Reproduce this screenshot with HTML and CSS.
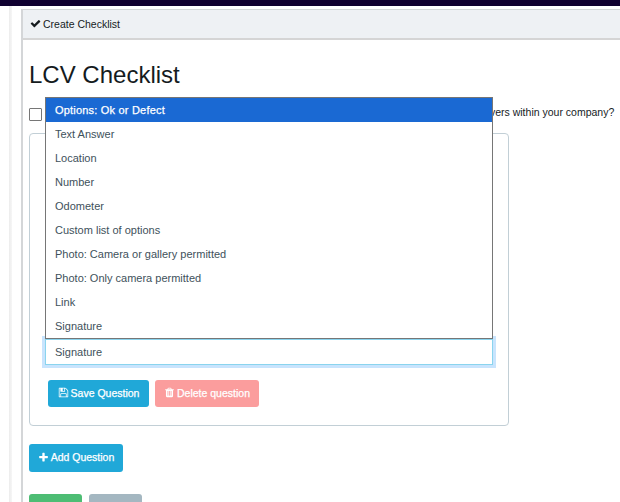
FILE: index.html
```html
<!DOCTYPE html>
<html lang="en">
<head>
<meta charset="utf-8">
<title>Create Checklist</title>
<link rel="stylesheet" href="styles.css">
</head>
<body>
<div class="topbar"></div>
<div class="layout">
  <div class="rail"></div>
  <section class="panel">
    <header class="panel-head">
      <svg class="icon icon-check" viewBox="0 0 1792 1792"><path d="M1671 566q0 40-28 68l-724 724-136 136q-28 28-68 28t-68-28l-136-136-362-362q-28-28-28-68t28-68l136-136q28-28 68-28t68 28l294 295 656-657q28-28 68-28t68 28l136 136q28 28 28 68z"/></svg>
      <span>Create Checklist</span>
    </header>
    <div class="panel-body">
      <h1 class="title">LCV Checklist</h1>
      <label class="share">
        <span class="checkbox"></span>
        <span class="share-text">Would you really like this checklist to be made visible and available for use by all of the other drivers within your company?</span>
      </label>
      <div class="card">
        <div class="select-wrap">
          <ul class="dropdown">
            <li class="selected">Options: Ok or Defect</li>
            <li>Text Answer</li>
            <li>Location</li>
            <li>Number</li>
            <li>Odometer</li>
            <li>Custom list of options</li>
            <li>Photo: Camera or gallery permitted</li>
            <li>Photo: Only camera permitted</li>
            <li>Link</li>
            <li>Signature</li>
          </ul>
          <div class="select">Signature</div>
        </div>
        <div class="card-actions">
          <button class="btn btn-info" type="button">
            <svg class="icon" viewBox="0 0 1792 1792"><path d="M512 1536h768v-384h-768v384zm896 0h128v-896q0-14-10-38.500t-20-34.500l-281-281q-10-10-34-20t-39-10v416q0 40-28 68t-68 28h-576q-40 0-68-28t-28-68v-416h-128v1280h128v-416q0-40 28-68t68-28h832q40 0 68 28t28 68v416zm-384-928v-320q0-13-9.500-22.500t-22.500-9.500h-192q-13 0-22.500 9.500t-9.500 22.500v320q0 13 9.500 22.500t22.500 9.500h192q13 0 22.500-9.500t9.500-22.500zm640 32v928q0 40-28 68t-68 28h-1344q-40 0-68-28t-28-68v-1344q0-40 28-68t68-28h928q40 0 88 20t76 48l280 280q28 28 48 76t20 88z"/></svg>
            <span>Save Question</span>
          </button>
          <button class="btn btn-danger" type="button">
            <svg class="icon" viewBox="0 0 1792 1792"><path d="M704 1376v-704q0-14-9-23t-23-9h-64q-14 0-23 9t-9 23v704q0 14 9 23t23 9h64q14 0 23-9t9-23zm256 0v-704q0-14-9-23t-23-9h-64q-14 0-23 9t-9 23v704q0 14 9 23t23 9h64q14 0 23-9t9-23zm256 0v-704q0-14-9-23t-23-9h-64q-14 0-23 9t-9 23v704q0 14 9 23t23 9h64q14 0 23-9t9-23zm-544-992h448l-48-117q-7-9-17-11h-317q-10 2-17 11zm928 32v64q0 14-9 23t-23 9h-96v948q0 83-47 143.500t-113 60.500h-832q-66 0-113-58.500t-47-141.500v-952h-96q-14 0-23-9t-9-23v-64q0-14 9-23t23-9h309l70-167q15-37 54-63t79-26h320q40 0 79 26t54 63l70 167h309q14 0 23 9t9 23z"/></svg>
            <span>Delete question</span>
          </button>
        </div>
      </div>
      <button class="btn btn-info btn-add" type="button">
        <svg class="icon" viewBox="0 0 1792 1792"><path d="M1600 736v192q0 40-28 68t-68 28h-416v416q0 40-28 68t-68 28h-192q-40 0-68-28t-28-68v-416h-416q-40 0-68-28t-28-68v-192q0-40 28-68t68-28h416v-416q0-40 28-68t68-28h192q40 0 68 28t28 68v416h416q40 0 68 28t28 68z"/></svg>
        <span>Add Question</span>
      </button>
      <div class="form-actions">
        <button class="btn btn-success" type="button"></button>
        <button class="btn btn-muted" type="button"></button>
      </div>
    </div>
  </section>
</div>
</body>
</html>
```
FILE: styles.css
```css
* { box-sizing: border-box; }
html, body { margin: 0; height: 502px; overflow: hidden; }
body { background: #fff; font-family: "Liberation Sans", Arial, sans-serif; font-size: 10.5px; color: #151b1e; }
.topbar { height: 6px; background: #0f0030; }
.layout { display: flex; padding-left: 9px; height: 496px; }
.rail { width: 3px; flex: none; height: 100%; background: linear-gradient(to right, #ececec, #f6f6f6); }
.panel { flex: 1; min-width: 0; margin: 3px 0 0 9px; border-left: 2px solid #d4d6d8; border-top: 1px solid #d4d6d8; }
.panel-head { height: 30px; display: flex; align-items: center; gap: 2px; padding: 0 0 1px 7px; background: #eef1f4; border-bottom: 2px solid #d5d5d5; }
.icon { width: 11px; height: 11px; fill: currentColor; flex: none; }
.panel-body { padding: 20px 6px 0; }
.title { margin: 0; font-size: 24px; font-weight: 400; line-height: 30px; white-space: nowrap; }
.share { display: flex; align-items: flex-start; gap: 4px; height: 18px; margin-top: 14px; white-space: nowrap; }
.share-text { line-height: 16px; }
.checkbox { width: 13px; height: 13px; margin-top: 4px; border: 1px solid #767676; border-radius: 1px; background: #fff; flex: none; }
.card { width: 480px; height: 293px; margin-top: 11px; padding: 205px 15px 0; border: 1px solid #c2cfd6; border-radius: 4px; }
.select-wrap { position: relative; width: 448px; }
.select { height: 26px; padding: 0 9px; line-height: 24px; font-size: 11px; color: #3e515b; background: #fff; border: 1px solid #8ad4ee; box-shadow: 0 0 0 3px #c8e4fd; }
.dropdown { position: absolute; left: 0; right: 0; bottom: 100%; z-index: 5; margin: 0; padding: 0; list-style: none; background: #fff; border: 1px solid #767676; font-size: 11px; color: #3e515b; }
.dropdown li { height: 24px; line-height: 24px; padding: 0 9px; }
.dropdown .selected { background: #1a69d3; color: #fff; letter-spacing: .2px; -webkit-text-stroke: .25px #fff; }
.card-actions { display: flex; gap: 6px; margin-top: 15px; padding-left: 3px; }
.btn { display: inline-flex; align-items: center; justify-content: center; gap: 2px; border: 0; border-radius: 3px; padding: 0 0 2px; font: 400 10.5px "Liberation Sans", Arial, sans-serif; color: #fff; white-space: nowrap; -webkit-text-stroke: .25px #fff; }
.card-actions .btn { height: 27px; }
.card-actions .btn-info { width: 101px; }
.card-actions .btn-danger { width: 104px; }
.btn-info { background: #20a8d8; }
.btn-danger { background: #fb9d9d; }
.btn-add { height: 28px; width: 94px; margin-top: 18px; display: flex; }
.form-actions { display: flex; gap: 7px; margin-top: 22px; }
.btn-success { width: 53px; height: 30px; background: #4dbd74; }
.btn-muted { width: 53px; height: 30px; background: #a4b7c1; }
```
